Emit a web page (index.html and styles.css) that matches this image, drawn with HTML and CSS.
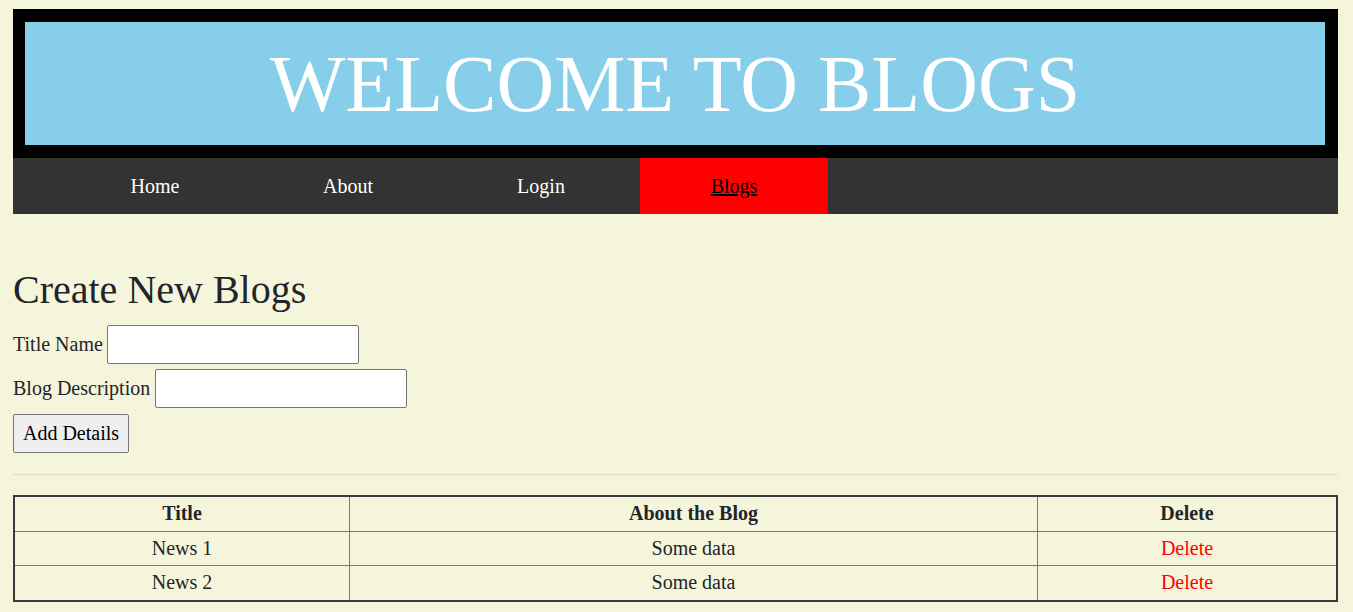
FILE: index.html
```html
<!DOCTYPE html>
<html>
<head>
<meta charset="utf-8">
<link rel="stylesheet" href="styles.css">
</head>
<body>
<header class="banner">
  <h1 class="banner-title">WELCOME TO BLOGS</h1>
</header>
<nav class="nav">
  <a class="nav-item" href="#">Home</a>
  <a class="nav-item" href="#">About</a>
  <a class="nav-item" href="#">Login</a>
  <a class="nav-item active" href="#">Blogs</a>
</nav>
<main class="content">
  <h2 class="section-title">Create New Blogs</h2>
  <form class="form">
    <div class="row"><label>Title Name</label><input class="field" type="text"></div>
    <div class="row wide"><label>Blog Description</label><input class="field" type="text"></div>
    <div class="row actions"><button class="btn" type="button">Add Details</button></div>
  </form>
  <hr class="divider">
  <table class="blogs">
    <thead>
      <tr><th class="c1">Title</th><th class="c2">About the Blog</th><th class="c3">Delete</th></tr>
    </thead>
    <tbody>
      <tr><td>News 1</td><td>Some data</td><td class="del">Delete</td></tr>
      <tr><td>News 2</td><td>Some data</td><td class="del">Delete</td></tr>
    </tbody>
  </table>
</main>
</body>
</html>
```
FILE: styles.css
```css
html, body {
  margin: 0;
  padding: 0;
}
body {
  background: #f5f5dc;
  font-family: "Liberation Serif", "Times New Roman", serif;
  color: #212529;
  padding: 9px 15px 0 13px;
}
.banner {
  border: 13px solid #000;
  border-left-width: 12px;
  background: #87ceeb;
  height: 123px;
  display: flex;
  align-items: center;
  justify-content: center;
}
.banner-title {
  margin: 0;
  font-weight: normal;
  font-size: 80px;
  color: #fff;
  line-height: 1;
}
.nav {
  background: #333;
  height: 56px;
  display: flex;
  align-items: stretch;
  padding-left: 48px;
  gap: 5px;
}
.nav-item {
  width: 188px;
  display: flex;
  align-items: center;
  justify-content: center;
  color: #fff;
  text-decoration: none;
  font-size: 20px;
}
.nav-item.active {
  background: #ff0000;
  color: #000;
  text-decoration: underline;
}
.content {
  padding-top: 52px;
}
.section-title {
  margin: 0 0 11px;
  font-weight: normal;
  font-size: 40px;
  line-height: 48px;
}
.form {
  display: flex;
  flex-direction: column;
  gap: 5px;
}
.row {
  display: flex;
  align-items: center;
  gap: 4px;
  font-size: 20px;
}
.row.wide {
  gap: 5px;
}
.row.actions {
  margin-top: 1px;
}
.field {
  width: 252px;
  height: 39px;
  box-sizing: border-box;
  border: 1px solid #767676;
  border-radius: 2px;
  background: #fff;
}
.btn {
  font-family: "Liberation Serif", "Times New Roman", serif;
  font-size: 20px;
  color: #000;
  height: 39px;
  width: 116px;
  background: #efefef;
  border: 1px solid #767676;
  border-radius: 2px;
  padding: 0;
}
.divider {
  border: 0;
  border-top: 1px solid #dcdcd0;
  margin: 21px 0 20px;
}
.blogs {
  width: 100%;
  border-collapse: collapse;
  border: 2px solid #3a3a3a;
  font-size: 20px;
}
.blogs th, .blogs td {
  border: 1px solid #7a7a7a;
  text-align: center;
  height: 33.6px;
  padding: 0;
}
.blogs th {
  font-weight: bold;
}
.c1 { width: 334px; }
.c3 { width: 298px; }
.del { color: #ff0000; }
```
